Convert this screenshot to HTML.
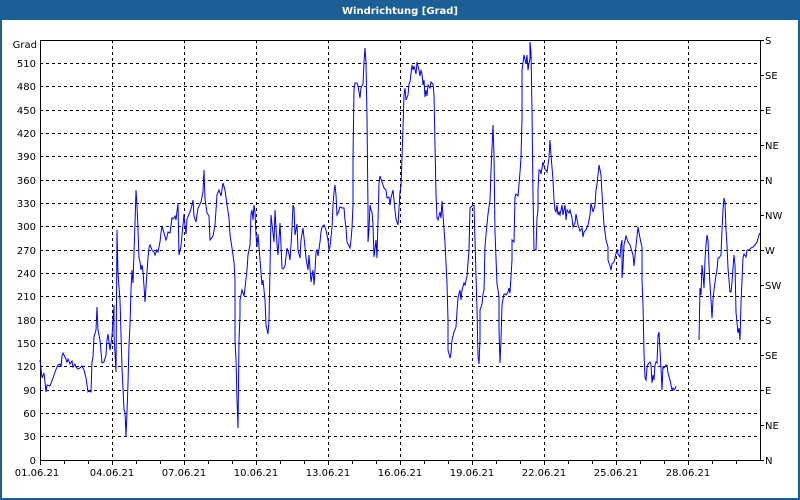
<!DOCTYPE html>
<html><head><meta charset="utf-8"><style>
html,body{margin:0;padding:0;width:800px;height:500px;overflow:hidden;background:#fff}
svg{display:block}
text{font-family:"DejaVu Sans","Liberation Sans",sans-serif;font-size:10px;fill:#000}
</style></head><body>
<svg width="800" height="500" viewBox="0 0 800 500" xmlns="http://www.w3.org/2000/svg">
<rect x="0" y="0" width="800" height="500" fill="#fff"/>
<rect x="0" y="0" width="800" height="20" fill="#1c5f96"/>
<rect x="0" y="0" width="2" height="500" fill="#1c5f96"/>
<rect x="798" y="0" width="2" height="500" fill="#1c5f96"/>
<rect x="0" y="498" width="800" height="2" fill="#1c5f96"/>
<text x="400" y="14" text-anchor="middle" style="fill:#fff;font-weight:bold;font-size:10px">Windrichtung [Grad]</text>
<g stroke="#000" stroke-width="1" stroke-dasharray="3,3" fill="none" shape-rendering="crispEdges">
<path d="M40 63.5H760M40 86.5H760M40 110.5H760M40 133.5H760M40 156.5H760M40 180.5H760M40 203.5H760M40 226.5H760M40 250.5H760M40 273.5H760M40 296.5H760M40 320.5H760M40 343.5H760M40 366.5H760M40 390.5H760M40 413.5H760M40 436.5H760"/>
<path d="M112.5 40V460M184.5 40V460M256.5 40V460M328.5 40V460M400.5 40V460M472.5 40V460M544.5 40V460M616.5 40V460M688.5 40V460"/>
</g>
<g stroke="#000" stroke-width="1" fill="none" shape-rendering="crispEdges">
<path d="M40.5 40V460.5H760.5V40M40 40.5H760"/>
<path d="M40.5 460v5M64.5 460v4M88.5 460v4M112.5 460v5M136.5 460v4M160.5 460v4M184.5 460v5M208.5 460v4M232.5 460v4M256.5 460v5M280.5 460v4M304.5 460v4M328.5 460v5M352.5 460v4M376.5 460v4M400.5 460v5M424.5 460v4M448.5 460v4M472.5 460v5M496.5 460v4M520.5 460v4M544.5 460v5M568.5 460v4M592.5 460v4M616.5 460v5M640.5 460v4M664.5 460v4M688.5 460v5M712.5 460v4M736.5 460v4"/>
<path d="M760 40.5h4M760 75.5h4M760 110.5h4M760 145.5h4M760 180.5h4M760 215.5h4M760 250.5h4M760 285.5h4M760 320.5h4M760 355.5h4M760 390.5h4M760 425.5h4M760 460.5h4"/>
</g>
<g text-anchor="end">
<text x="37" y="48">Grad</text>
<text x="36" y="67">510</text><text x="36" y="90">480</text><text x="36" y="114">450</text><text x="36" y="137">420</text><text x="36" y="160">390</text><text x="36" y="184">360</text><text x="36" y="207">330</text><text x="36" y="230">300</text><text x="36" y="254">270</text><text x="36" y="277">240</text><text x="36" y="300">210</text><text x="36" y="324">180</text><text x="36" y="347">150</text><text x="36" y="370">120</text><text x="36" y="394">90</text><text x="36" y="417">60</text><text x="36" y="440">30</text><text x="36" y="464">0</text>
</g>
<g>
<text x="765" y="44">S</text><text x="765" y="79">SE</text><text x="765" y="114">E</text><text x="765" y="149">NE</text><text x="765" y="184">N</text><text x="765" y="219">NW</text><text x="765" y="254">W</text><text x="765" y="289">SW</text><text x="765" y="324">S</text><text x="765" y="359">SE</text><text x="765" y="394">E</text><text x="765" y="429">NE</text><text x="765" y="464">N</text>
</g>
<g text-anchor="middle">
<text x="37" y="476">01.06.21</text><text x="112" y="476">04.06.21</text><text x="184" y="476">07.06.21</text><text x="256" y="476">10.06.21</text><text x="328" y="476">13.06.21</text><text x="400" y="476">16.06.21</text><text x="472" y="476">19.06.21</text><text x="544" y="476">22.06.21</text><text x="616" y="476">25.06.21</text><text x="688" y="476">28.06.21</text>
</g>
<g fill="none" stroke="#0000ee" stroke-width="1">
<polyline points="40,360 42,378 44,373 46,392 47,385 50,386 53,378 55,372 57,367 58,365 60,364 61,367 62,356 63,353 65,357 67,362 68,359 70,364 72,361 73,367 75,364 76,367 78,369 80,368 82,366 84,370 85,374 86,378 88,392 89,391 91,392 92,362 93,357 94,337 96,330 97,307 98,330 100,340 102,363 104,362 106,355 107,340 108,334 109,342 110,350 112,336 113,320 114,305 114,335 116,372 117,230 118,274 120,300 122,368 124,410 125,412 126,436 127,412 128,383 129,345 130,325 131,290 132,270 133,283 134,252 135,224 136,190 137,205 138,230 139,258 140,262 141,270 142,265 143,272 144,286 145,302 146,287 147,272 148,258 149,248 150,245 152,250 154,252 155,255 157,250 158,252 160,242 161,233 162,226 164,233 166,240 167,237 168,232 170,233 172,218 173,219 175,216 176,220 178,203 179,255 181,246 184,214 185,226 186,234 187,219 190,212 192,205 193,200 194,216 196,222 198,208 201,202 203,192 204,170 205,199 207,213 209,216 210,240 213,236 215,225 217,195 219,190 221,196 223,183 225,190 227,205 229,218 230,235 232,248 234,262 235,280 235,340 236,360 237,400 238,428 239,340 240,316 240,300 242,290 244,296 245,288 247,270 248,255 250,245 251,214 252,210 253,220 254,205 255,212 256,235 257,247 258,234 260,260 262,285 263,280 265,300 266,325 268,334 269,320 270,270 271,215 272,224 274,242 275,210 277,245 278,255 280,223 281,245 282,268 283,269 285,266 287,248 289,254 290,260 291,245 292,228 293,205 294,208 295,235 297,224 298,250 300,258 301,240 303,228 305,247 306,258 308,270 309,255 311,282 313,270 314,285 315,270 316,252 317,250 318,256 320,242 321,232 322,227 324,225 326,230 328,240 329,250 330,247 331,237 332,228 333,205 334,192 335,185 336,195 337,215 338,213 340,207 342,208 344,208 345,220 346,228 347,242 349,246 350,248 351,240 352,228 353,205 353,158 354,90 355,83 357,83 358,86 359,92 360,98 361,88 362,86 363,84 364,62 365,48 366,62 367,118 368,210 368,242 369,230 370,205 371,210 372,212 373,225 374,257 376,240 377,258 378,220 379,183 380,176 382,182 384,188 386,190 387,198 389,197 390,205 391,198 393,190 395,210 396,219 398,225 400,192 401,186 403,128 404,95 405,88 406,100 408,95 409,84 410,82 412,65 413,70 414,66 415,70 416,74 417,62 419,70 420,76 421,70 422,74 423,85 424,80 425,97 426,90 427,96 428,85 430,88 431,82 433,84 434,95 436,194 437,218 438,220 440,212 441,218 442,201 443,215 444,229 445,243 447,283 448,320 448,350 450,358 451,353 452,340 454,332 456,327 457,311 458,298 460,290 461,300 462,290 464,283 465,285 467,276 469,250 470,208 472,206 474,205 477,310 478,356 479,364 480,340 480,310 482,304 483,294 484,290 485,246 486,235 488,214 490,200 491,171 493,125 494,155 495,232 497,284 498,290 499,297 499,330 500,363 501,340 502,305 504,294 505,294 506,295 508,292 509,288 510,293 512,260 512,240 514,242 515,197 516,194 518,196 520,172 521,158 522,119 522,70 524,55 526,64 527,55 528,70 529,63 530,59 530,42 531,52 532,110 533,195 534,250 536,250 537,218 538,210 538,190 539,170 540,170 541,174 543,162 545,169 547,172 549,158 550,140 551,155 553,180 554,200 555,210 556,212 557,205 558,215 559,212 560,215 562,205 563,215 565,205 566,220 567,210 569,213 570,210 572,218 573,227 575,223 576,214 578,225 580,231 582,228 583,237 584,232 586,230 588,225 590,215 591,203 593,212 595,205 596,190 597,184 599,165 600,170 601,175 602,194 604,225 605,232 606,240 608,247 608,260 610,266 611,270 612,264 614,262 615,258 617,249 618,254 620,257 621,245 622,240 622,278 623,267 624,245 626,236 628,242 630,245 633,255 634,266 636,246 638,227 640,238 641,243 642,247 642,280 643,305 644,353 645,378 646,380 647,368 648,364 650,362 651,365 652,383 653,375 654,380 655,365 656,362 657,363 658,336 659,332 660,350 661,368 662,390 663,366 664,368 666,365 667,365 668,373 670,380 672,390 673,388 674,390 675,389 676,386"/>
<polyline points="699,340 700,288 701,295 702,265 703,275 704,288 705,260 706,245 707,235 708,240 709,265 710,285 711,300 712,318 713,300 714,290 716,275 717,270 718,258 719,258 721,255 722,230 723,210 724,198 725,202 726,230 727,245 728,268 730,292 731,292 732,282 733,268 734,255 735,265 736,312 738,333 739,328 740,340 741,303 743,258 744,254 746,257 747,250 749,250 751,248 753,247 755,245 757,242 759,235 760,233"/>
</g>
</svg>
</body></html>
